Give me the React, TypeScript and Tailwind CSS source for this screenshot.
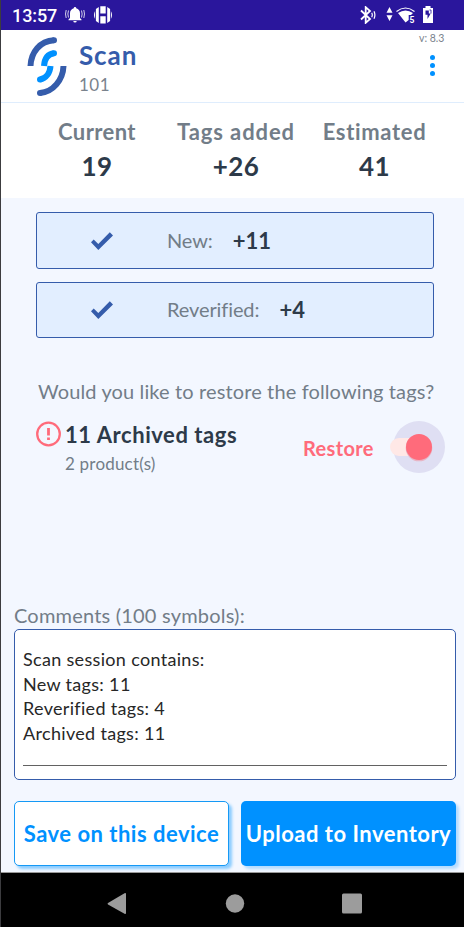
const stats = [
  { label: 'Current', value: '19', cell: 'w-[138px]', labelClass: 'tracking-[0.4px]' },
  { label: 'Tags added', value: '+26', cell: 'w-[140px]', labelClass: 'tracking-[0.9px]' },
  { label: 'Estimated', value: '41', cell: 'w-[137px]', labelClass: 'tracking-[0.65px]' },
];

const StatusBar = () => (
  <div className="flex h-[30px] items-center bg-[#2a169c] pl-[11px] text-white">
    <span className="w-[53px] whitespace-nowrap pt-[2px] font-[Roboto] text-[18px] font-medium leading-[28px] tracking-[-0.1px]">13:57</span>
    <svg width="20" height="16" viewBox="0 0 20 16" fill="white">
      <path d="M10 0a1.2 1.2 0 0 1 1.2 1.3C13.7 2 15 4 15 6.3V11l1.5 1.5v.7h-13v-.7L5 11V6.3C5 4 6.3 2 8.8 1.3A1.2 1.2 0 0 1 10 0zM8.300 14h3.400a1.700 1.600 0 0 1-3.400 0z" />
      <path d="M3.5 3.500q-1.300 3.500 0 7M1.200 3q-1.400 4 0 8M16.500 3.500q1.300 3.500 0 7M18.800 3q1.400 4 0 8" fill="none" stroke="white" strokeWidth="0.8" />
    </svg>
    <svg className="ml-[9px]" width="18" height="18" viewBox="0 0 18 18" fill="white">
      <path d="M6.300 0.300h5.400v7.200H6.300zM6.300 10.300h5.400v7.200H6.300zM4.800 1v16L1.900 15V3zM13.200 1v16l2.900-2V3z" />
      <path d="M1.100 5v8Q0 11 0 9t1.100-4zM16.900 5v8Q18 11 18 9t-1.100-4z" />
    </svg>
    <div className="ml-auto flex items-center pr-[30px]">
      <svg width="16" height="18" viewBox="0 0 16 18" fill="none" stroke="white" strokeWidth="1.800">
        <path d="M1 4.500l9 8.500-4.300 3.800V1.200L10 5l-9 8.500" />
        <path d="M11.700 6.800q1.200 2.200 0 4.400M14 5.300q1.800 3.700 0 7.400" strokeWidth="1.200" />
      </svg>
      <svg className="mb-[3px] ml-[10px]" width="7" height="14" viewBox="0 0 7 14" fill="white">
        <path d="M3.500 0L6.500 5.800h-6zM3.500 14l3-5.800h-6z" />
      </svg>
      <svg className="ml-[3px]" width="20" height="16" viewBox="0 0 20 16">
        <path d="M0.500 4.500Q9.500-2.500 18.500 4.500" fill="none" stroke="white" strokeWidth="1.200" />
        <path d="M2 6Q9.500 1 17 6l-2 2h-2.300v5L9.500 15.500z" fill="white" />
        <text x="13.500" y="15.500" fill="white" fontFamily="Roboto" fontSize="8.500" fontWeight="700">5</text>
      </svg>
      <svg className="mb-px ml-[6px]" width="12" height="17" viewBox="0 0 12 17">
        <path d="M3.500 0h5v2H11v15H1V2h2.500z" fill="white" />
        <path d="M3.500 4.500v4.300h2V13L8.700 7.500H6.800V4.500z" fill="#2a169c" />
        <path d="M7.500 4H9v3.500" fill="none" stroke="#2a169c" strokeWidth="0.8" />
      </svg>
    </div>
  </div>
);

const Logo = () => (
  <svg width="42" height="60" viewBox="0 0 42 60" fill="none">
    <path d="M4.500 29C5 15 14 4 28 3.200" stroke="#355cab" strokeWidth="6" />
    <circle cx="28" cy="3.300" r="3" fill="#355cab" />
    <path d="M37.500 29C37 43 27 55 14 56" stroke="#355cab" strokeWidth="6" />
    <circle cx="14" cy="56" r="3" fill="#355cab" />
    <path d="M18 29C18.500 22 21.500 17 28 16.200" stroke="#0091ff" strokeWidth="6" />
    <circle cx="28" cy="16.200" r="3" fill="#0091ff" />
    <path d="M24.500 29C24 36 20 41.500 14 42.500" stroke="#0091ff" strokeWidth="6" />
    <circle cx="14" cy="42.500" r="3" fill="#0091ff" />
  </svg>
);

const CheckMark = () => (
  <svg width="22" height="18" viewBox="0 0 22 18" fill="#355cab">
    <path d="M0 10.300L2.700 7.600 7.300 12 18.800.3 22 3.400 7.300 18z" />
  </svg>
);

const Header = () => (
  <header className="flex h-[73px] border-b border-[#dfedfd] bg-white">
    <div className="pl-[25px] pt-[7px]">
      <Logo />
    </div>
    <div className="pl-[11px] pt-[9px]">
      <h1 className="text-[26px] font-bold leading-[32px] tracking-[0.9px] text-[#355cab]">Scan</h1>
      <p className="mt-[2px] text-[17px] leading-[24px] tracking-[0.5px] text-[#7a838d]">101</p>
    </div>
    <div className="ml-auto flex w-[45px] flex-col">
      <span className="whitespace-nowrap text-[10.5px] leading-[16px] text-[#7a838d]">v: 8.3</span>
      <button className="ml-[11px] mt-[9px] flex flex-col gap-[3px]">
        <span className="size-[5px] rounded-full bg-[#0091ff]" />
        <span className="size-[5px] rounded-full bg-[#0091ff]" />
        <span className="size-[5px] rounded-full bg-[#0091ff]" />
      </button>
    </div>
  </header>
);

const ResultRow = ({ label, value, height }: { label: string; value: string; height: string }) => (
  <div className={`flex items-center rounded-[3px] border border-[#355cab] bg-[#e2eeff] pl-[54px] ${height}`}>
    <CheckMark />
    <span className="ml-[54px] pb-[2px] text-[20px] tracking-[-0.1px] text-[#727d88]">{label}</span>
    <span className="ml-[20px] pb-px text-[22px] font-bold text-[#2d3a49]">{value}</span>
  </div>
);

const App = () => (
  <div className="flex h-[927px] w-[464px] flex-col overflow-hidden border-l border-[#3c3c3f] bg-[#f3f7ff] font-[Lato,sans-serif]">
    <StatusBar />
    <Header />

    <section className="flex h-[95px] bg-white pl-[27px] pt-[15px]">
      {stats.map((stat) => (
        <div key={stat.label} className={`flex flex-col items-center whitespace-nowrap font-bold ${stat.cell}`}>
          <span className={`text-[22px] leading-[28px] text-[#727d88] ${stat.labelClass}`}>{stat.label}</span>
          <span className="mt-[2px] text-[26px] leading-[36px] tracking-[0.4px] text-[#2d3a49]">{stat.value}</span>
        </div>
      ))}
    </section>

    <main className="flex flex-1 flex-col">
      <div className="mt-[14px] flex flex-col gap-[13px] pl-[35px] pr-[30px]">
        <ResultRow label="New:" value="+11" height="h-[57px]" />
        <ResultRow label="Reverified:" value="+4" height="h-[56px]" />
      </div>

      <p className="mt-[39px] whitespace-nowrap pl-[37px] text-[20px] leading-[28px] tracking-[0.13px] text-[#727d88]">
        Would you like to restore the following tags?
      </p>

      <div className="mt-[14px] flex h-[56px] pl-[35px]">
        <svg className="mt-[1.500px]" width="26" height="26" viewBox="0 0 26 26" fill="none" stroke="#ff6b7b" strokeWidth="2.300">
          <circle cx="12.500" cy="13" r="11.300" />
          <path d="M12.500 7v7.500M12.500 16.500V19" strokeWidth="2.800" />
        </svg>
        <div className="w-[239px] whitespace-nowrap pl-[3px]">
          <h2 className="text-[22px] font-bold leading-[32px] tracking-[0.55px] text-[#2d3a49]">11 Archived tags</h2>
          <p className="text-[17px] leading-[26px] tracking-[0.2px] text-[#727d88]">2 product(s)</p>
        </div>
        <span className="mt-[15px] w-[87px] pl-[2px] text-[20px] font-bold leading-[28px] tracking-[0.35px] text-[#ff6b7b]">Restore</span>
        <svg className="mt-[1px] overflow-visible" width="56" height="54" viewBox="0 0 56 54">
          <circle cx="31" cy="27" r="26" fill="#dfdff3" />
          <rect x="2" y="18" width="38" height="18" rx="9" fill="#ffe8e6" />
          <circle cx="31" cy="28" r="13.300" fill="#e8b4c4" />
          <circle cx="31" cy="27" r="13" fill="#ff6b7b" />
        </svg>
      </div>

      <div className="mt-auto pl-[13px] pr-[8px]">
        <label className="block text-[20px] leading-[28px] tracking-[0.2px] text-[#727d88]">Comments (100 symbols):</label>
        <div className="h-[151px] rounded-[5px] border border-[#355cab] bg-white px-[8px] pt-[17px]">
          <p className="h-[119px] whitespace-pre-line border-b border-[#626262] text-[18px] leading-[24.7px] tracking-[0.32px] text-[#272727]">
            {'Scan session contains:\nNew tags: 11\nReverified tags: 4\nArchived tags: 11'}
          </p>
        </div>
        <div className="mb-[6px] mt-[21px] flex gap-[12px]">
          <button className="h-[65px] w-[215px] whitespace-nowrap rounded-[5px] border border-[#1599f5] bg-white text-[22px] font-bold tracking-[0.5px] text-[#0091ff] shadow-[3px_3px_3px_#8accff]">
            Save on this device
          </button>
          <button className="h-[65px] w-[215px] whitespace-nowrap rounded-[5px] bg-[#0091ff] text-[22px] font-bold tracking-[0.5px] text-white shadow-[3px_3px_3px_#b4dcff]">
            Upload to Inventory
          </button>
        </div>
      </div>
    </main>

    <nav className="flex h-[55px] items-center border-t border-[#999] bg-black pl-[106px] pt-[7px]">
      <svg width="256" height="24" viewBox="0 0 256 24" fill="#9c9c9c">
        <path d="M17.500 1.200Q19 .5 19 2v19q0 1.500-1.500.8L1 12.500q-1-.8 0-1.500z" />
        <circle cx="128" cy="11.500" r="9.200" />
        <rect x="235" y="1.500" width="20" height="20" rx="1.500" />
      </svg>
    </nav>
  </div>
);

export default App;
